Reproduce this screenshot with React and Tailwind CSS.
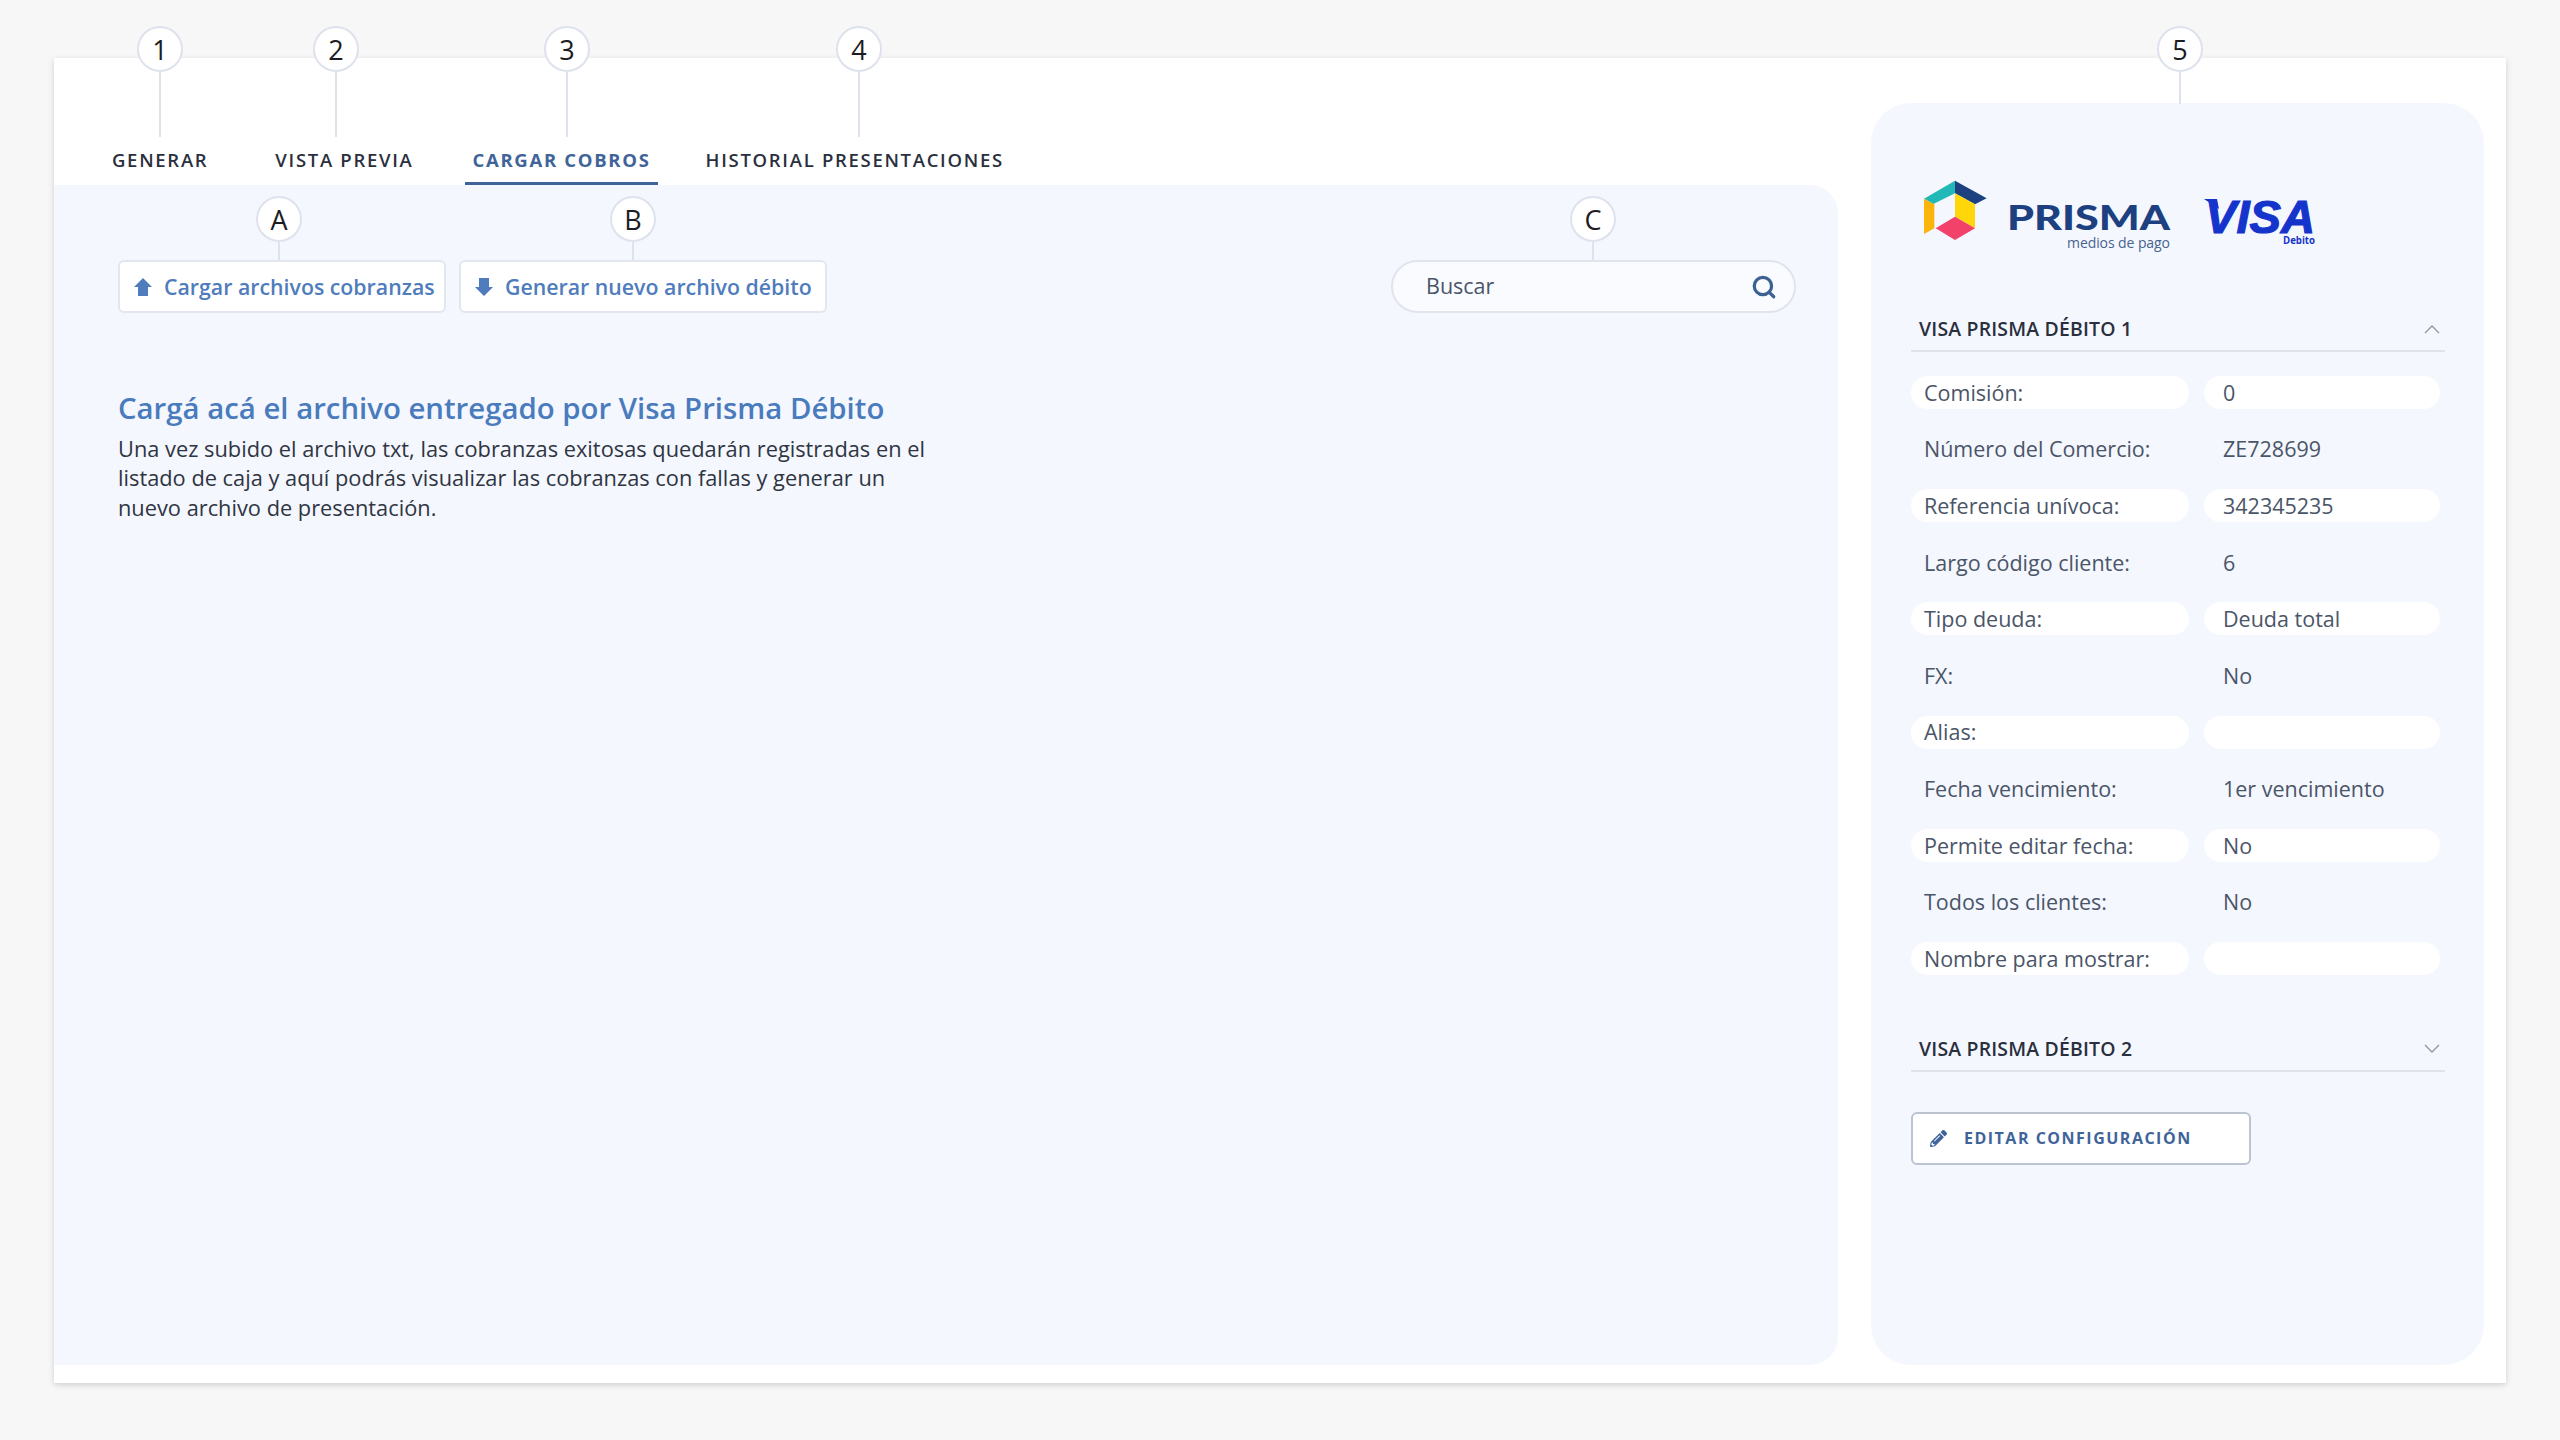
import { Search } from "lucide-react";
import { FaPencilAlt } from "react-icons/fa";

const rows = [
  ["Comisión:", "0"],
  ["Número del Comercio:", "ZE728699"],
  ["Referencia unívoca:", "342345235"],
  ["Largo código cliente:", "6"],
  ["Tipo deuda:", "Deuda total"],
  ["FX:", "No"],
  ["Alias:", ""],
  ["Fecha vencimiento:", "1er vencimiento"],
  ["Permite editar fecha:", "No"],
  ["Todos los clientes:", "No"],
  ["Nombre para mostrar:", ""],
];

// marcador numerado con su linea, va encima del contenido
function Marker({ label, className, lineClass }) {
  return (
    <div className={`absolute z-10 flex -translate-x-1/2 flex-col items-center ${className}`}>
      <div className="flex h-[46px] w-[46px] items-center justify-center rounded-full border-2 border-[#dde2ec] bg-white text-[27px] leading-none text-[#1c1c22]">
        {label}
      </div>
      <div className={`w-[2px] bg-[#dde2ec] ${lineClass}`} />
    </div>
  );
}

function Chevron({ up }) {
  return (
    <svg width="16" height="10" viewBox="0 0 16 10" fill="none" stroke="#8d97a8" strokeWidth="1.3">
      <path d={up ? "M1 9 L8 2 L15 9" : "M1 1 L8 8 L15 1"} />
    </svg>
  );
}

function SectionHeader({ title, up }) {
  return (
    <div className="flex h-[44px] items-center justify-between border-b-2 border-[#dfe3ec] pl-[8px] pr-[5px]">
      <span className="text-[19.4px] font-semibold tracking-[0.2px] text-[#2a2f3d]">{title}</span>
      <Chevron up={up} />
    </div>
  );
}

function ConfigRow({ label, value, pill }) {
  const bg = pill ? "bg-white" : "";
  return (
    <div className="flex h-[33px] gap-[15px] text-[21.5px] text-[#4a5568]">
      <div className={`flex w-[278px] items-center rounded-full pl-[13px] pt-[1px] ${bg}`}>{label}</div>
      <div className={`flex w-[236px] items-center rounded-full pl-[19px] pt-[1px] ${bg}`}>{value}</div>
    </div>
  );
}

function PrismaLogo() {
  return (
    <div className="flex items-start">
      <svg width="64" height="60" viewBox="70 60 190 180" className="mt-[1px]">
        <polygon points="72,116 165,62 165,100 100,132" fill="#22b8b8" />
        <polygon points="165,62 260,115 225,133 165,100" fill="#1d4080" />
        <polygon points="165,100 225,133 225,205 165,170" fill="#ffd60a" />
        <polygon points="72,116 103,133 103,205 72,222" fill="#fbb40a" />
        <polygon points="165,170 225,205 165,240 107,205" fill="#f2426a" />
      </svg>
      <svg width="170" height="78" viewBox="0 0 170 78" className="ml-[19px]">
        <text x="1" y="51" textLength="163" lengthAdjust="spacingAndGlyphs" fontFamily="Lato" fontWeight="900" fontSize="35" fill="#1d4080">
          PRISMA
        </text>
        <text x="61" y="69" textLength="103" lengthAdjust="spacing" fontFamily="Open Sans" fontSize="14" fill="#47638f">
          medios de pago
        </text>
      </svg>
    </div>
  );
}

function VisaLogo() {
  return (
    <svg width="112" height="78" viewBox="0 0 112 78">
      <polygon points="0,20 13,20 15,30" fill="#1434cb" />
      <text x="1" y="54" textLength="110" lengthAdjust="spacingAndGlyphs" fontFamily="Liberation Sans" fontWeight="700" fontStyle="italic" fontSize="47" fill="#1434cb" stroke="#1434cb" strokeWidth="1.2">
        VISA
      </text>
      <text x="79" y="65" textLength="32" lengthAdjust="spacingAndGlyphs" fontFamily="Open Sans" fontWeight="700" fontSize="10" fill="#1434cb">
        Debito
      </text>
    </svg>
  );
}

export default function App() {
  return (
    <div
      className="min-h-screen bg-[#f7f7f8] pl-[54px] pr-[54px] pt-[58px]"
      style={{ fontFamily: '"Open Sans", sans-serif' }}
    >
      <div className="relative flex h-[1325px] w-[2452px] bg-white pb-[18px] pr-[22px] shadow-[0_2px_6px_rgba(0,0,0,0.16)]">
        <Marker label="1" className="left-[106px] top-[-32px]" lineClass="h-[65px]" />
        <Marker label="2" className="left-[282px] top-[-32px]" lineClass="h-[65px]" />
        <Marker label="3" className="left-[513px] top-[-32px]" lineClass="h-[65px]" />
        <Marker label="4" className="left-[805px] top-[-32px]" lineClass="h-[65px]" />
        <Marker label="5" className="left-[2126px] top-[-32px]" lineClass="h-[32px]" />
        <Marker label="A" className="left-[225px] top-[138px]" lineClass="h-[18px]" />
        <Marker label="B" className="left-[579px] top-[138px]" lineClass="h-[18px]" />
        <Marker label="C" className="left-[1539px] top-[138px]" lineClass="h-[18px]" />

        <div className="flex w-[1784px] flex-col">
          <nav className="flex h-[127px] items-end pl-[51px] text-[18.5px] font-semibold tracking-[1.7px] text-[#2a2f3d]">
            <div className="flex h-[51px] items-center px-[7px]">GENERAR</div>
            <div className="ml-[53px] flex h-[51px] items-center px-[7px]">VISTA PREVIA</div>
            <div className="ml-[45px] flex h-[51px] items-center border-b-[3px] border-[#3f6499] px-[7px] pt-[3px] font-bold text-[#3f6499]">
              CARGAR COBROS
            </div>
            <div className="ml-[41px] flex h-[51px] items-center px-[7px]">HISTORIAL PRESENTACIONES</div>
          </nav>

          <main className="flex-1 rounded-r-[28px] bg-[#f4f7fe] pl-[64px] pr-[42px] pt-[75px]">
            <div className="flex items-start">
              <button className="flex h-[53px] w-[328px] items-center gap-[12px] rounded-[6px] border-2 border-[#e2e6ee] bg-white pl-[14px] text-[21.3px] font-semibold text-[#4f7cbc]">
                <svg width="18" height="18" viewBox="0 0 18 18" fill="currentColor">
                  <path d="M9 0 L18 9 L14 9 L14 18 L4 18 L4 9 L0 9 Z" />
                </svg>
                Cargar archivos cobranzas
              </button>
              <button className="ml-[13px] flex h-[53px] w-[368px] items-center gap-[12px] rounded-[6px] border-2 border-[#e2e6ee] bg-white pl-[14px] text-[21.3px] font-semibold text-[#4f7cbc]">
                <svg width="18" height="18" viewBox="0 0 18 18" fill="currentColor">
                  <path d="M9 18 L18 9 L14 9 L14 0 L4 0 L4 9 L0 9 Z" />
                </svg>
                Generar nuevo archivo débito
              </button>
              <div className="ml-auto flex h-[53px] w-[405px] items-center justify-between rounded-full border-2 border-[#e0e4ed] bg-[#f9fbff] pl-[33px] pr-[17px] text-[21.5px] text-[#4a5568]">
                Buscar
                <Search size={26} strokeWidth={3} color="#3b6292" />
              </div>
            </div>

            <h1 className="mt-[75px] text-[29.35px] font-semibold leading-[40px] text-[#4a7bbd]">
              Cargá acá el archivo entregado por Visa Prisma Débito
            </h1>
            <p className="mt-[6px] w-[815px] text-[21.8px] leading-[29.4px] text-[#2f3542]">
              Una vez subido el archivo txt, las cobranzas exitosas quedarán registradas en el listado de caja y aquí podrás visualizar las cobranzas con fallas y generar un nuevo archivo de presentación.
            </p>
          </main>
        </div>

        <aside className="ml-[33px] mt-[45px] flex-1 rounded-[40px] bg-[#f4f7fe] pl-[40px] pr-[39px]">
          <div className="flex h-[205px] items-start gap-[28px] pl-[12px] pt-[76px]">
            <PrismaLogo />
            <VisaLogo />
          </div>
          <SectionHeader title="VISA PRISMA DÉBITO 1" up />
          <div className="mt-[24px] flex flex-col gap-[23.6px]">
            {rows.map(([label, value], i) => (
              <ConfigRow key={label} label={label} value={value} pill={i % 2 === 0} />
            ))}
          </div>
          <div className="mt-[53px]">
            <SectionHeader title="VISA PRISMA DÉBITO 2" />
          </div>
          <button className="mt-[40px] flex h-[53px] w-[340px] items-center gap-[17px] rounded-[6px] border-2 border-[#bcc4d2] bg-white pl-[17px] text-[16px] font-bold tracking-[1.5px] text-[#3f6499]">
            <FaPencilAlt size={17} />
            EDITAR CONFIGURACIÓN
          </button>
        </aside>
      </div>
    </div>
  );
}
